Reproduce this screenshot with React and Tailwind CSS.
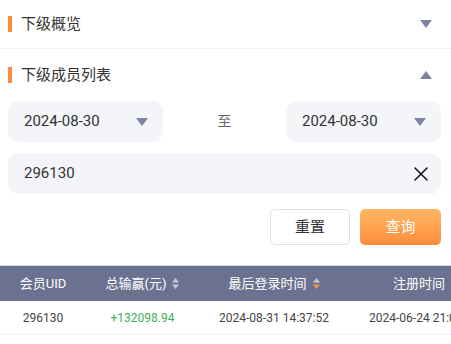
import React from "react";

const font = { fontFamily: '"Roboto", "Noto Sans CJK SC", sans-serif' };

function Tri({ up = false, className = "" }) {
  return (
    <svg width="12" height="8" viewBox="0 0 12 8" className={className}>
      {up ? <path d="M6 0 L12 8 L0 8 Z" fill="#7e83a0" /> : <path d="M0 0 L12 0 L6 8 Z" fill="#7e83a0" />}
    </svg>
  );
}

function Sort({ active = false }) {
  return (
    <svg width="7" height="11" viewBox="0 0 7 11" className="ml-[6px]">
      <path d="M3.5 0 L7 4.5 L0 4.5 Z" fill="#c5c9d8" />
      <path d="M0 6.5 L7 6.5 L3.5 11 Z" fill={active ? "#f7963f" : "#c5c9d8"} />
    </svg>
  );
}

function SectionHeader({ title, up, className = "" }) {
  return (
    <div className={"flex items-center pl-2 pr-[19px] " + className}>
      <div className="w-[4px] h-[16px] bg-[#ff8a3d]" />
      <div className="ml-[9px] text-[15px] text-[#333] flex-1">{title}</div>
      <Tri up={up} />
    </div>
  );
}

function DateBox({ value }) {
  return (
    <div className="w-[155px] h-[41px] rounded-[10px] bg-[#f4f5f9] flex items-center pl-4 pr-[15px]">
      <span className="text-[15px] text-[#333] flex-1">{value}</span>
      <Tri />
    </div>
  );
}

export default function App() {
  return (
    <div className="w-[451px] h-[344px] bg-white overflow-hidden" style={font}>
      <SectionHeader title="下级概览" className="h-[49px] border-b border-[#f0f0f3]" />
      <SectionHeader title="下级成员列表" up className="h-[52px]" />
      <div className="pl-2 pr-[10px]">
        <div className="flex items-center justify-between">
          <DateBox value="2024-08-30" />
          <span className="text-[14px] text-[#666]">至</span>
          <DateBox value="2024-08-30" />
        </div>
        <div className="mt-[11px] h-[41px] rounded-[10px] bg-[#f4f5f9] flex items-center pl-4 pr-[13px]">
          <span className="text-[15px] text-[#333] flex-1">296130</span>
          <svg width="14" height="14" viewBox="0 0 14 14">
            <path d="M1 1 L13 13 M13 1 L1 13" stroke="#111" strokeWidth="1.5" strokeLinecap="round" />
          </svg>
        </div>
        <div className="mt-[15px] flex justify-end gap-[10px]">
          <button className="w-[80px] h-[36px] rounded-[5px] border border-[#dcdfe8] bg-white text-[15px] text-[#333]">重置</button>
          <button className="w-[81px] h-[36px] rounded-[5px] bg-gradient-to-b from-[#ffb862] to-[#ff8a3d] text-[15px] text-white">查询</button>
        </div>
      </div>
      <div className="mt-[20px] border-t border-[#d8dae3] overflow-hidden">
        <div className="w-[500px]">
          <div className="h-[35px] bg-[#6b7290] flex items-center text-[13px] text-white">
            <div className="w-[86px] flex justify-center">会员UID</div>
            <div className="w-[113px] flex justify-center items-center">总输赢(元)<Sort /></div>
            <div className="w-[150px] flex justify-center items-center">最后登录时间<Sort active /></div>
            <div className="w-[140px] flex justify-center">注册时间</div>
          </div>
          <div className="h-[34px] flex items-center text-[12px] text-[#444] border-b border-[#eeeff3]">
            <div className="w-[86px] flex justify-center">296130</div>
            <div className="w-[113px] flex justify-center text-[#43b05c]">+132098.94</div>
            <div className="w-[150px] flex justify-center">2024-08-31 14:37:52</div>
            <div className="w-[150px] flex justify-center">2024-06-24 21:05:11</div>
          </div>
        </div>
      </div>
    </div>
  );
}
